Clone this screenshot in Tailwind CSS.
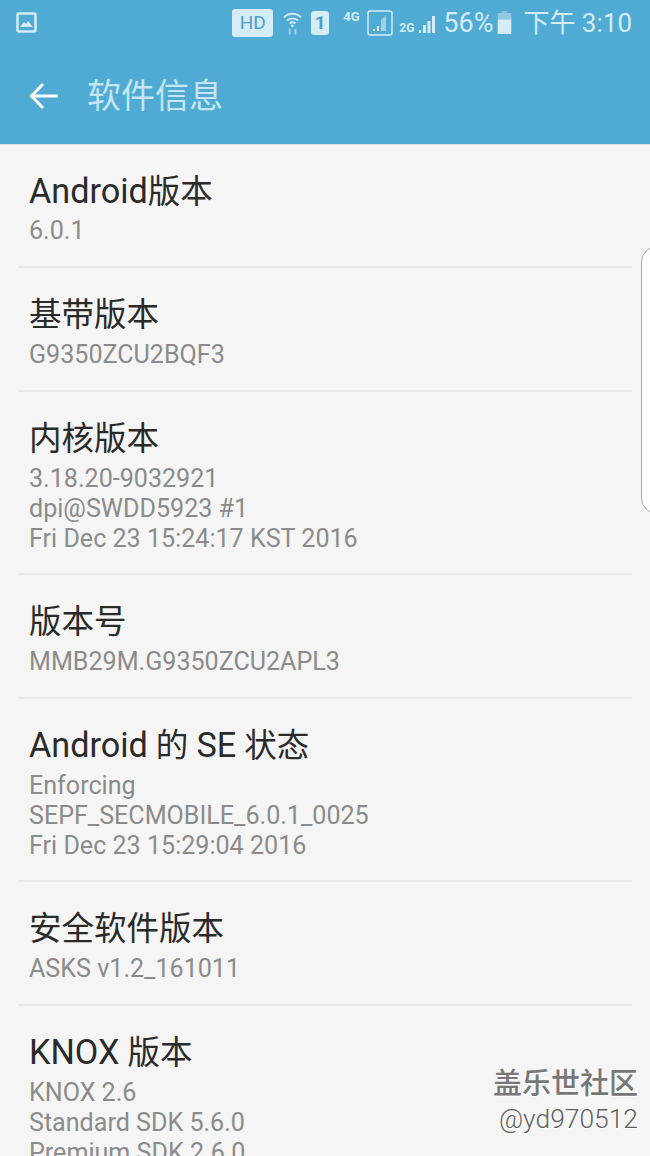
<!DOCTYPE html>
<html>
<head>
<meta charset="utf-8">
<script src="https://cdn.jsdelivr.net/npm/@tailwindcss/browser@4"></script>
</head>
<body class="m-0">
<div class="relative w-[650px] h-[1156px] overflow-hidden bg-[#f5f5f5] font-['Roboto','Noto_Sans_CJK_SC',sans-serif]">
  <header class="h-[145px] bg-[#4fabd3] border-b border-[#dfe3e5]">
    <div class="h-[45px] flex items-center pl-[16px] pr-[18px] text-[#d3ecf6]">
      <svg class="w-[21px] h-[21px]" viewBox="0 0 21 21"><rect x="1.5" y="1.5" width="18" height="18" rx="1.5" fill="none" stroke="#d3ecf6" stroke-width="2.5"/><path d="M4 15l4-5 2 2 2-3 5 6z" fill="#d3ecf6"/></svg>
      <div class="ml-auto w-[41px] h-[28px] rounded-[3px] bg-[#d3ecf6] text-[#4f9fc6] text-[19px] flex items-center justify-center leading-none">HD</div>
      <svg class="ml-[10px] w-[19px] h-[26px]" viewBox="0 0 20 26" fill="none" stroke="#d3ecf6" stroke-width="2"><path d="M1 7c5-5 13-5 18 0M4 10.500c3.500-3.200 8.500-3.200 12 0M7 13.500c1.800-1.500 4.200-1.500 6 0"/><circle cx="10" cy="16" r="1.500" fill="#d3ecf6" stroke="none"/><path d="M7 19v6M13 19v6" stroke="#9fd0e6"/></svg>
      <div class="ml-[9px] w-[18px] h-[24px] rounded-[3px] bg-[#d3ecf6] text-[#4f9fc6] text-[19px] font-bold flex items-center justify-center leading-none">1</div>
      <span class="ml-[14px] -mt-[12px] w-[18px] text-[13px] font-bold leading-none">4G</span>
      <svg class="ml-[6px] w-[26px] h-[26px]" viewBox="0 0 26 26"><rect x="1" y="1" width="24" height="24" rx="2" fill="none" stroke="#d3ecf6" stroke-width="1.500"/><path d="M19 5v16H14V10z" fill="#9fd0e6"/><path d="M6 19h2v2H6zM10 16h2v5h-2z" fill="#d3ecf6"/></svg>
      <span class="ml-[6px] mt-[10px] w-[20px] text-[12px] font-bold leading-none">2G</span>
      <svg class="w-[16px] h-[22px]" viewBox="0 0 16 22" fill="#d3ecf6"><path d="M0 18h2v3H0zM4 13h3v8H4zM8.500 9h3v12h-3zM13 4h3v17h-3z"/></svg>
      <span class="ml-[8px] mt-[2px] text-[27px] leading-none">56%</span>
      <svg class="ml-[4px] w-[15px] h-[23px]" viewBox="0 0 13 22"><path d="M4 0h5v2h4v6H0V2h4z" fill="#8fc8e2"/><path d="M0 8h13v14H0z" fill="#d3ecf6"/></svg>
      <span class="ml-[11px] text-[26px] leading-none">下午 3:10</span>
    </div>
    <div class="h-[100px] flex items-center pl-[29px] pt-[2px]">
      <svg class="w-[30px] h-[28px]" viewBox="0 0 30 28" fill="none" stroke="#ffffff" stroke-width="3"><path d="M29 14H3M14 2L2.500 14 14 26"/></svg>
      <h1 class="ml-[28px] text-[34px] font-normal text-[#c5e5f3] leading-none">软件信息</h1>
    </div>
  </header>
  <main>
    <section class="h-[121px] pt-[27px] pl-[29px]">
      <h2 class="text-[32.500px] leading-[38px] font-normal text-[#2a2a2a]"><span class="text-[34.200px]">Android</span>版本</h2>
      <p class="mt-[5px] text-[25.100px] leading-[30px] text-[#8b8b8b]">6.0.1</p>
    </section>
    <section class="h-[124px] border-t-2 border-[#e9e9e9] ml-[18px] mr-[18px] pt-[28px] pl-[11px]">
      <h2 class="text-[32.500px] leading-[38px] font-normal text-[#2a2a2a]">基带版本</h2>
      <p class="mt-[6px] text-[25.100px] leading-[30px] text-[#8b8b8b]">G9350ZCU2BQF3</p>
    </section>
    <section class="h-[183px] border-t-2 border-[#e9e9e9] ml-[18px] mr-[18px] pt-[28px] pl-[11px]">
      <h2 class="text-[32.500px] leading-[38px] font-normal text-[#2a2a2a]">内核版本</h2>
      <p class="mt-[6px] text-[25.100px] leading-[30px] text-[#8b8b8b]">3.18.20-9032921<br>dpi@SWDD5923 #1<br>Fri Dec 23 15:24:17 KST 2016</p>
    </section>
    <section class="h-[124px] border-t-2 border-[#e9e9e9] ml-[18px] mr-[18px] pt-[28px] pl-[11px]">
      <h2 class="text-[32.500px] leading-[38px] font-normal text-[#2a2a2a]">版本号</h2>
      <p class="mt-[6px] text-[25.100px] leading-[30px] text-[#8b8b8b]">MMB29M.G9350ZCU2APL3</p>
    </section>
    <section class="h-[183px] border-t-2 border-[#e9e9e9] ml-[18px] mr-[18px] pt-[27px] pl-[11px]">
      <h2 class="text-[32.500px] leading-[38px] font-normal text-[#2a2a2a]"><span class="text-[34.200px]">Android</span> 的 <span class="text-[34.200px]">SE</span> 状态</h2>
      <p class="mt-[6px] text-[25.100px] leading-[30px] text-[#8b8b8b]">Enforcing<br>SEPF_SECMOBILE_6.0.1_0025<br>Fri Dec 23 15:29:04 2016</p>
    </section>
    <section class="h-[124px] border-t-2 border-[#e9e9e9] ml-[18px] mr-[18px] pt-[28px] pl-[11px]">
      <h2 class="text-[32.500px] leading-[38px] font-normal text-[#2a2a2a]">安全软件版本</h2>
      <p class="mt-[6px] text-[25.100px] leading-[30px] text-[#8b8b8b]">ASKS v1.2_161011</p>
    </section>
    <section class="h-[183px] border-t-2 border-[#e9e9e9] ml-[18px] mr-[18px] pt-[27px] pl-[11px]">
      <h2 class="text-[32.500px] leading-[38px] font-normal text-[#2a2a2a]"><span class="text-[34.200px]">KNOX</span> 版本</h2>
      <p class="mt-[6px] text-[25.100px] leading-[30px] text-[#8b8b8b]">KNOX 2.6<br>Standard SDK 5.6.0<br>Premium SDK 2.6.0</p>
    </section>
  </main>
  <div class="absolute left-[641px] top-[246px] w-[20px] h-[268px] rounded-l-[16px] bg-white border border-[#a8a8a8]"></div>
  <div class="absolute right-[12px] top-[1067px] text-right leading-none">
    <p class="text-[29px] leading-[34px] font-medium text-[#777777] [text-shadow:0_1px_0_#ffffff]">盖乐世社区</p>
    <p class="text-[26.400px] leading-[36px] font-light text-[#5f5f5f] [text-shadow:0_1px_0_#ffffff]">@yd970512</p>
  </div>
</div>
</body>
</html>
